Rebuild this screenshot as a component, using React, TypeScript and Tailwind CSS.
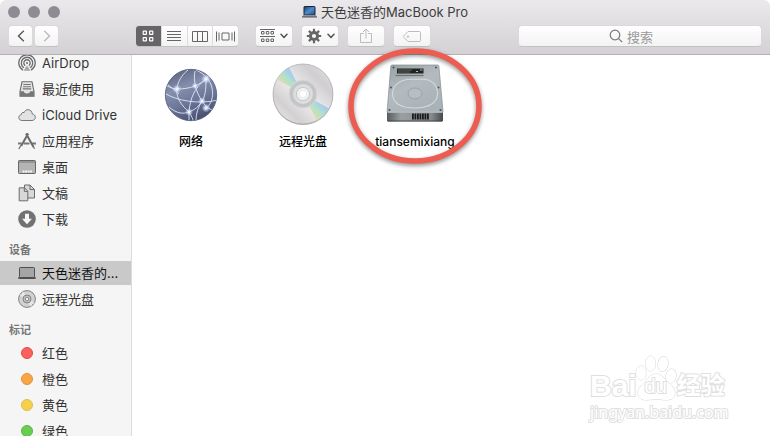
import { useState } from 'react';
import type { ReactNode } from 'react';

const AirDropIcon = () => (
  <svg viewBox="0 0 18 18" className="size-[18px]" fill="none" stroke="#6b6b6b" strokeWidth="1.3">
    <path d="M5 16.1A8.2 8.2 0 1 1 13 16.1" />
    <path d="M6 13.8A5.7 5.7 0 1 1 12 13.8" />
    <path d="M7.2 11.6A3.2 3.2 0 1 1 10.8 11.6" />
    <circle cx="9" cy="9" r="1" fill="#6b6b6b" stroke="none" />
    <path d="M9 11.5 5.5 16.8h7z" fill="#a5a5a5" stroke="none" />
  </svg>
);

const RecentsIcon = () => (
  <svg viewBox="0 0 18 18" className="size-[18px]">
    <path d="M4 1.8h10l2 9.7v4.7H2v-4.7z" fill="#e4e4e4" stroke="#6b6b6b" strokeWidth="1.1" />
    <path d="M5.3 4.5h7.4M5 6.7h8M4.8 8.9h8.4" stroke="#777" strokeWidth="1.1" />
    <path d="M2 11.3h3.8c.4 1.7 1.2 2.2 3.2 2.2s2.8-.5 3.2-2.2H16v4.9H2z" fill="#777" />
  </svg>
);

const CloudIcon = () => (
  <svg viewBox="0 0 18 18" className="size-[18px]">
    <path
      d="M4.2 14.5C2 14.5.8 13.3.8 11.6c0-1.5.9-2.5 2.3-2.8 0-1.7 1.5-2.7 3-2.2.7-1.8 2.1-2.9 3.9-2.9 2.4 0 4.2 1.8 4.2 4.3 1.8.2 3.1 1.5 3.1 3.2 0 1.9-1.4 3.3-3.4 3.3z"
      fill="#e2e2e2"
      stroke="#777"
    />
  </svg>
);

const AppsIcon = () => (
  <svg viewBox="0 0 18 18" className="size-[18px]" fill="none">
    <path d="M0 11.5h3.8M6 11.5h5.5M14 11.5h4" stroke="#777" strokeWidth="2" />
    <path d="M8 1.5l7.5 13.5M10.2 1.5 3.2 14" stroke="#6b6b6b" strokeWidth="2" />
    <path d="M2.8 13.5.8 17M15.3 14.5l1.2 2.2" stroke="#6b6b6b" strokeWidth="1.2" />
  </svg>
);

const DesktopIcon = () => (
  <svg viewBox="0 0 18 18" className="size-[18px]">
    <rect x=".5" y="2.5" width="17" height="13" rx=".8" fill="#b4b4b4" stroke="#666" />
    <path d="M1 4h16" stroke="#777" />
    <path d="M4.5 13.5h9.5" stroke="#f0f0f0" strokeWidth="2" strokeDasharray="2 .5" />
  </svg>
);

const DocumentsIcon = () => (
  <svg viewBox="0 0 18 18" className="size-[18px]" stroke="#6b6b6b">
    <path d="M6.500 1h5.500l4.500 4.500V14h-10z" fill="#d8d8d8" />
    <path d="M12 1v4.500h4.500" fill="none" />
    <path d="M1.200 3.800h5.300l3.300 3.400v9.600H1.200z" fill="#d8d8d8" />
    <path d="M6.300 3.800v3.600h3.500" fill="none" />
  </svg>
);

const DownloadsIcon = () => (
  <svg viewBox="0 0 18 18" className="size-[18px]">
    <circle cx="9" cy="9" r="8.8" fill="#727272" />
    <path d="M7 3.8h4v5h3L9 14.200 4 8.800h3z" fill="#f7f7f7" />
  </svg>
);

const LaptopIcon = () => (
  <svg viewBox="0 0 18 18" className="size-[18px]">
    <rect x="1.5" y="3.5" width="15" height="10" rx=".8" fill="#a5a5a5" stroke="#4f4f4f" />
    <path d="M0 13.2h18v.8l-1 .9H1l-1-.9z" fill="#4f4f4f" />
  </svg>
);

const SmallDiscIcon = () => (
  <svg viewBox="0 0 18 18" className="size-[18px]" stroke="#808080">
    <circle cx="9" cy="9" r="8.4" fill="#d2d2d2" />
    <path d="M9 9 2.5 4.5M9 9 4.500 2.500M9 9l6.500 4.500M9 9l4.500 6.500" stroke="#f0f0f0" strokeWidth="1.5" />
    <circle cx="9" cy="9" r="4" fill="#c6c6c6" />
    <circle cx="9" cy="9" r="1.8" fill="#f5f5f5" />
  </svg>
);

const TitleLaptop = () => (
  <svg viewBox="0 0 15 12" className="h-3 w-[15px]">
    <defs>
      <linearGradient id="screen" x1="0" y1="0" x2="1" y2="1">
        <stop offset="0" stopColor="#173a6b" />
        <stop offset=".5" stopColor="#4d8ed0" />
        <stop offset="1" stopColor="#254f86" />
      </linearGradient>
    </defs>
    <rect x="2" y=".5" width="11" height="8.5" rx=".6" fill="url(#screen)" stroke="#20242b" />
    <path d="M1.2 9h12.6l1.2 2H0z" fill="#8f9298" />
    <path d="M0 11h15" stroke="#505359" />
  </svg>
);

const NetworkIcon = () => (
  <svg viewBox="0 0 64 64" className="size-16">
    <defs>
      <linearGradient id="globe" x1="0.2" y1="0" x2=".6" y2="1">
        <stop offset="0" stopColor="#59627f" />
        <stop offset=".35" stopColor="#8690ad" />
        <stop offset=".65" stopColor="#6c7798" />
        <stop offset="1" stopColor="#454e70" />
      </linearGradient>
      <radialGradient id="spark">
        <stop offset="0" stopColor="#fff" />
        <stop offset=".35" stopColor="#e6edff" stopOpacity=".8" />
        <stop offset="1" stopColor="#c5d2ff" stopOpacity="0" />
      </radialGradient>
      <clipPath id="globeClip">
        <circle cx="32" cy="33" r="25.5" />
      </clipPath>
    </defs>
    <circle cx="32" cy="33" r="25.7" fill="url(#globe)" stroke="#525b7c" strokeWidth=".8" />
    <g clipPath="url(#globeClip)" fill="none" stroke="#e2e8f8" strokeWidth=".9">
      <path d="M8 24c5 2 7 3 10 3 12 0 24-3 32-14" />
      <path d="M7 32c10 6 32 11 52 6" />
      <path d="M8 22c6 5 9 7 12 10" />
      <path d="M29 8c-10 8-14 20-9 30 3 6 7 9 10 12" />
      <path d="M37 8c9 4 14 10 16 18 2 9-1 17-7 21" />
      <path d="M47 17C36 25 31 36 30 50v8" />
      <path d="M36 9c-2 10 1 21 7 30 4 6 8 9 14 10" />
      <path d="M10 45c8 7 15 7 20 5 7-3 9-5 13-11 3-4 4-11 4-22" />
      <path d="M30 50c3 5 4 7 4 9M43 39c-4 7-6 12-6 20" />
    </g>
    <g fill="url(#spark)">
      <circle cx="18" cy="27" r="4.5" />
      <circle cx="47" cy="17" r="5" />
      <circle cx="36" cy="24" r="3.5" />
      <circle cx="43" cy="39" r="4" />
      <circle cx="30" cy="50" r="4" />
      <circle cx="47" cy="46" r="4.5" />
    </g>
  </svg>
);

const DiscIcon = () => (
  <svg viewBox="0 0 64 64" className="size-16">
    <defs>
      <linearGradient id="disc" x1="0" y1="1" x2="1" y2="0">
        <stop offset="0" stopColor="#efeeef" />
        <stop offset=".25" stopColor="#d3d0d2" />
        <stop offset=".5" stopColor="#eeedee" />
        <stop offset=".75" stopColor="#d0ced0" />
        <stop offset="1" stopColor="#e4e2e4" />
      </linearGradient>
      <linearGradient id="rainbow" x1="0" y1="1" x2="1" y2="0">
        <stop offset="0" stopColor="#f4c7a4" stopOpacity="0" />
        <stop offset=".25" stopColor="#f0d59c" />
        <stop offset=".45" stopColor="#a9e0b8" />
        <stop offset=".65" stopColor="#93c9ee" />
        <stop offset=".85" stopColor="#c1afe4" />
        <stop offset="1" stopColor="#c1afe4" stopOpacity="0" />
      </linearGradient>
    </defs>
    <circle cx="32" cy="33" r="30" fill="#8f8f8f" opacity=".7" />
    <circle cx="32" cy="32" r="30" fill="url(#disc)" stroke="#aaa" strokeWidth=".7" />
    <path d="M32 32 6 17.500a30 30 0 0 1 12-12z" fill="url(#rainbow)" opacity=".8" />
    <path d="M32 32 58 46.500a30 30 0 0 1-12 12z" fill="url(#rainbow)" opacity=".8" />
    <circle cx="32" cy="32" r="14" fill="#c3c5c6" stroke="#d8dadb" />
    <circle cx="32" cy="32" r="10.5" fill="#dcddde" stroke="#b9bbbd" strokeWidth=".7" />
    <circle cx="32" cy="32" r="6.5" fill="#f4f4f4" stroke="#b9bbbd" strokeWidth=".8" />
    <circle cx="32" cy="32" r="3.8" fill="#fff" stroke="#d8d8d8" strokeWidth=".6" />
  </svg>
);

const HardDriveIcon = () => (
  <svg viewBox="0 0 64 64" className="size-16">
    <defs>
      <linearGradient id="drive" x1="0" y1="0" x2=".6" y2="1">
        <stop offset="0" stopColor="#98a1a6" />
        <stop offset=".5" stopColor="#b3bbbf" />
        <stop offset="1" stopColor="#a9b2b7" />
      </linearGradient>
      <linearGradient id="driveEdge" x1="0" y1="0" x2="1" y2="0">
        <stop offset="0" stopColor="#565b5e" />
        <stop offset=".25" stopColor="#9a9fa2" />
        <stop offset=".8" stopColor="#85898c" />
        <stop offset="1" stopColor="#45494c" />
      </linearGradient>
    </defs>
    <path d="M4 49.5h56v8.8l-1.2 1.200H5.200L4 58.300z" fill="url(#driveEdge)" />
    <path
      d="M9 3h45.500c.8 0 1.300.4 1.400 1.200L60 49.500c-.1.700-.6 1-1.300 1H5.300c-.8 0-1.300-.4-1.200-1.200L7.800 4.200C7.900 3.400 8.300 3 9 3z"
      fill="url(#drive)"
      stroke="#858d91"
      strokeWidth=".7"
    />
    <path d="M5 50.200h54.500" stroke="#cbd0d2" strokeWidth=".8" />
    <path d="M14 6.500h26.500v5H14z" fill="#222522" />
    <path d="M15 8h14M15 10h12" stroke="#73756a" strokeWidth=".8" />
    <path d="M33 9.500h2M37 8h2.500" stroke="#b4b7b6" strokeWidth="1.1" />
    <path d="M12.500 13.500h28" stroke="#68747a" strokeWidth="1.2" />
    <path
      d="M42 17.200H27C15 18 9.500 24.500 9.500 32 10 41 18 46 32 46c14 0 22-5.500 22.500-13.500.3-8-3.500-13.500-12.500-15.300"
      fill="none"
      stroke="#d3d9dc"
      strokeWidth="1.100"
    />
    <ellipse cx="32" cy="31.5" rx="7" ry="5.5" fill="#b6bec2" stroke="#919a9f" strokeWidth=".8" />
    <g fill="#4c5356">
      <circle cx="10.500" cy="5.500" r="1" />
      <circle cx="53" cy="5.500" r="1" />
      <circle cx="8" cy="25.500" r="1" />
      <circle cx="55.500" cy="25.500" r="1" />
      <circle cx="6.500" cy="48" r="1.100" />
      <circle cx="57.500" cy="48" r="1.100" />
    </g>
    <path d="M29 54.500h17" stroke="#191b1c" strokeWidth="6" strokeDasharray="1.800 .7" />
    <path d="M4.500 59h55" stroke="#3e4143" strokeWidth=".9" />
  </svg>
);

interface PlaceItem {
  id: string;
  label: string;
  icon: ReactNode;
}

const dot = (className: string) => <span className={`size-3 rounded-full border ${className}`} />;

const sections: { title: string | null; items: PlaceItem[] }[] = [
  {
    title: null,
    items: [
      { id: 'airdrop', label: 'AirDrop', icon: <AirDropIcon /> },
      { id: 'recents', label: '最近使用', icon: <RecentsIcon /> },
      { id: 'icloud', label: 'iCloud Drive', icon: <CloudIcon /> },
      { id: 'apps', label: '应用程序', icon: <AppsIcon /> },
      { id: 'desktop', label: '桌面', icon: <DesktopIcon /> },
      { id: 'documents', label: '文稿', icon: <DocumentsIcon /> },
      { id: 'downloads', label: '下载', icon: <DownloadsIcon /> },
    ],
  },
  {
    title: '设备',
    items: [
      { id: 'macbook', label: '天色迷香的...', icon: <LaptopIcon /> },
      { id: 'remote-disc', label: '远程光盘', icon: <SmallDiscIcon /> },
    ],
  },
  {
    title: '标记',
    items: [
      { id: 'red', label: '红色', icon: dot('border-[#e04b48] bg-[#fc605c]') },
      { id: 'orange', label: '橙色', icon: dot('border-[#e2923a] bg-[#f7a545]') },
      { id: 'yellow', label: '黄色', icon: dot('border-[#e5bd42] bg-[#f5d04d]') },
      { id: 'green', label: '绿色', icon: dot('border-[#59b944] bg-[#69cd51]') },
    ],
  },
];

const volumes: PlaceItem[] = [
  { id: 'network', label: '网络', icon: <NetworkIcon /> },
  { id: 'disc', label: '远程光盘', icon: <DiscIcon /> },
  { id: 'drive', label: 'tiansemixiang', icon: <HardDriveIcon /> },
];

const views: PlaceItem[] = [
  {
    id: 'icons',
    label: 'Icon view',
    icon: (
      <svg viewBox="0 0 12 12" className="size-3" fill="none" stroke="currentColor" strokeWidth="1.2">
        <rect x="1.2" y="1.2" width="3.200" height="3.200" rx=".4" />
        <rect x="7.600" y="1.200" width="3.200" height="3.200" rx=".4" />
        <rect x="1.200" y="7.600" width="3.200" height="3.200" rx=".4" />
        <rect x="7.600" y="7.600" width="3.200" height="3.200" rx=".4" />
      </svg>
    ),
  },
  {
    id: 'list',
    label: 'List view',
    icon: (
      <svg viewBox="0 0 14 11" className="h-[11px] w-3.5" stroke="currentColor">
        <path d="M0 .5h14M0 3.500h14M0 6.500h14M0 9.500h14" />
      </svg>
    ),
  },
  {
    id: 'columns',
    label: 'Column view',
    icon: (
      <svg viewBox="0 0 16 11" className="h-[11px] w-4" fill="none" stroke="currentColor">
        <path d="M.5.5h15v10H.5zM5.500.5v10M10.500.5v10" />
      </svg>
    ),
  },
  {
    id: 'gallery',
    label: 'Gallery view',
    icon: (
      <svg viewBox="0 0 19 11" className="h-[11px] w-[19px]" fill="none" stroke="currentColor">
        <path d="M.5.5v10M3 1.500v8M18.500.5v10M16 1.500v8M6 2h7v7H6z" />
      </svg>
    ),
  },
];

const Chevron = () => (
  <svg viewBox="0 0 8 6" className="h-1.5 w-2" fill="none" stroke="#555" strokeWidth="1.5" strokeLinecap="round" strokeLinejoin="round">
    <path d="M1 1.200 4 4.400l3-3.200" />
  </svg>
);

const GearIcon = () => (
  <svg viewBox="0 0 16 16" className="size-4" fill="none" stroke="#666">
    <circle cx="8" cy="8" r="3.600" strokeWidth="3" />
    <path
      d="M8 .8v3M8 12.200v3M.8 8h3M12.200 8h3M2.900 2.900 5 5M11 11l2.100 2.100M2.900 13.100 5 11M11 5l2.100-2.100"
      strokeWidth="2.2"
    />
  </svg>
);

const actions: PlaceItem[] = [
  {
    id: 'arrange',
    label: 'Arrange',
    icon: (
      <>
        <svg viewBox="0 0 15 14" className="h-3.5 w-[15px]" fill="none" stroke="#666">
          <path d="M0 .5h15M0 7.500h15M1.500 2.500h2.500v2.500H1.500zM6.300 2.500h2.500v2.500H6.300zM11 2.500h2.500v2.500H11zM1.500 10h2.500v2.500H1.500zM6.300 10h2.500v2.500H6.300zM11 10h2.500v2.500H11z" />
        </svg>
        <Chevron />
      </>
    ),
  },
  {
    id: 'action',
    label: 'Action',
    icon: (
      <>
        <GearIcon />
        <Chevron />
      </>
    ),
  },
  {
    id: 'share',
    label: 'Share',
    icon: (
      <svg viewBox="0 0 12 16" className="h-4 w-3" fill="none" stroke="#bdbdbd">
        <path d="M4 5.500H.5v9h11v-9H8M6 10.500V1M3 4l3-3 3 3" />
      </svg>
    ),
  },
  {
    id: 'tags',
    label: 'Tags',
    icon: (
      <svg viewBox="0 0 18 11" className="h-[11px] w-[18px]" fill="none" stroke="#bdbdbd">
        <path d="M5 .5h11.500c.6 0 1 .4 1 1v8c0 .6-.4 1-1 1H5L.8 6.200c-.4-.4-.4-1 0-1.400z" />
        <circle cx="5" cy="5.500" r=".8" />
      </svg>
    ),
  },
];

const controlClass =
  'flex h-[22px] items-center justify-center rounded-[4px] border border-[#dad8da] border-b-[#c2c0c2] bg-gradient-to-b from-white to-[#f4f3f4]';

const Toolbar = () => {
  const [view, setView] = useState('icons');

  return (
    <header className="shrink-0 rounded-t-md border-b border-[#b3b1b3] bg-gradient-to-b from-[#ebe9eb] to-[#d3d1d3]">
      <div className="grid h-[23px] grid-cols-[1fr_auto_1fr] items-center px-2">
        <div className="flex gap-2">
          <button aria-label="Close" className="size-3 rounded-full bg-[#8e8c93]" />
          <button aria-label="Minimize" className="size-3 rounded-full bg-[#8e8c93]" />
          <button aria-label="Zoom" className="size-3 rounded-full bg-[#8e8c93]" />
        </div>
        <h1 className="flex items-center gap-1 text-[13px] leading-4 text-[#3c3c3c]">
          <TitleLaptop />
          天色迷香的MacBook Pro
        </h1>
      </div>

      <div className="flex items-center px-2 pt-0.5 pb-[7px]">
        <nav className="flex gap-px">
          <button aria-label="Back" className={`${controlClass} w-[25px]`}>
            <svg viewBox="0 0 8 12" className="h-3 w-2" fill="none" stroke="#555" strokeWidth="1.4">
              <path d="M6.800.8 1.500 6l5.300 5.200" />
            </svg>
          </button>
          <button aria-label="Forward" disabled className={`${controlClass} w-[25px]`}>
            <svg viewBox="0 0 8 12" className="h-3 w-2" fill="none" stroke="#bbb" strokeWidth="1.4">
              <path d="M1.200.8 6.500 6l-5.300 5.200" />
            </svg>
          </button>
        </nav>

        <div className={`${controlClass} ml-[76px] w-[104px] overflow-hidden`}>
          {views.map((item) => (
            <button
              key={item.id}
              aria-label={item.label}
              onClick={() => setView(item.id)}
              className={`flex h-[22px] flex-1 items-center justify-center border-r border-[#dedcde] last:border-r-0 ${
                view === item.id ? 'bg-[#666466] text-white' : 'text-[#666]'
              }`}
            >
              {item.icon}
            </button>
          ))}
        </div>

        <div className="ml-4 flex gap-2">
          {actions.map((item) => (
            <button key={item.id} aria-label={item.label} className={`${controlClass} w-[38px] gap-[5px]`}>
              {item.icon}
            </button>
          ))}
        </div>

        <label className={`${controlClass} ml-auto w-[244px] gap-1 pr-[18px]`}>
          <svg viewBox="0 0 14 14" className="size-3.5" fill="none" stroke="#777" strokeWidth="1.2">
            <circle cx="6" cy="6" r="4.800" />
            <path d="m9.600 9.600 3.600 3.600" />
          </svg>
          <input
            type="search"
            aria-label="搜索"
            placeholder="搜索"
            className="field-sizing-content h-4 text-[13px] leading-4 text-[#333] outline-none placeholder:text-[#999]"
          />
        </label>
      </div>
    </header>
  );
};

const Sidebar = () => {
  const [selected, setSelected] = useState('macbook');

  return (
    <aside className="w-[132px] shrink-0 overflow-hidden border-r border-[#dcdcdc] bg-[#f5f5f5]">
      {/* list is scrolled slightly under the toolbar */}
      <div className="-mt-[5px]">
        {sections.map((section) => (
          <section key={section.items[0].id}>
            {section.title && (
              <h2 className="h-7 pt-2.5 pl-[9px] text-[11px] leading-4 font-bold text-[#777]">{section.title}</h2>
            )}
            <ul>
              {section.items.map((item) => (
                <li key={item.id} className="py-px">
                  <button
                    onClick={() => setSelected(item.id)}
                    className={`flex h-6 w-full items-center gap-1.5 pl-[18px] text-[13px] leading-4 whitespace-nowrap ${
                      selected === item.id ? 'bg-[#c9c9c9] text-[#111]' : 'text-[#333]'
                    }`}
                  >
                    <span className="flex w-[18px] justify-center">{item.icon}</span>
                    {item.label}
                  </button>
                </li>
              ))}
            </ul>
          </section>
        ))}
      </div>
    </aside>
  );
};

const HighlightRing = () => (
  <svg
    viewBox="0 0 142 126"
    className="pointer-events-none absolute -top-4 left-1/2 h-[126px] w-[142px] -translate-x-1/2 drop-shadow-[0_2px_2px_rgba(0,0,0,0.45)]"
  >
    <ellipse cx="71" cy="60" rx="64" ry="55" fill="none" stroke="#ec5c50" strokeWidth="5.5" />
  </svg>
);

const Watermark = () => (
  <div className="pointer-events-none absolute right-[43px] bottom-3.5 w-[137px] text-white [paint-order:stroke_fill] [-webkit-text-stroke:2px_#e0e0e0]">
    <div className="flex items-end">
      <span className="font-['Liberation_Sans'] text-[30px] leading-8 font-bold">Bai</span>
      <div className="relative -ml-0.5 h-12 w-[42px] shrink-0">
        <svg viewBox="0 0 42 48" className="h-12 w-[42px]" fill="#fff" stroke="#d6d6d6">
          <ellipse cx="6" cy="19" rx="5" ry="7" />
          <ellipse cx="15.500" cy="9.500" rx="5" ry="7.500" />
          <ellipse cx="28" cy="10" rx="5" ry="7.500" transform="rotate(10 28 10)" />
          <ellipse cx="36" cy="22" rx="5" ry="7" transform="rotate(15 36 22)" />
          <path d="M21 20c-6 0-8 5-11 8-4 4-7 6-7 11 0 5 4 7 8 7 5 0 6-1 10-1s5 1 10 1 9-2 9-7-3-7-7-11c-4-3-6-8-12-8z" />
        </svg>
        <span className="absolute inset-x-0 bottom-1 text-center font-['Liberation_Sans'] text-[20px] leading-6">du</span>
      </div>
      <span className="text-[24px] leading-8 font-bold">经验</span>
    </div>
    <p className="font-['Noto_Sans'] text-[16px] leading-5 whitespace-nowrap">jingyan.baidu.com</p>
  </div>
);

export default function App() {
  return (
    <div className="flex h-screen flex-col overflow-hidden bg-white font-[Inter,'Noto_Sans_CJK_SC',sans-serif]">
      <Toolbar />
      <div className="flex min-h-0 flex-1">
        <Sidebar />
        <main className="relative min-w-0 flex-1 pt-[7px] pl-[3px]">
          <ul className="flex flex-wrap">
            {volumes.map((item) => (
              <li key={item.id} className="relative">
                <button className="flex w-28 flex-col items-center gap-2 text-[12px] leading-4 font-medium text-black">
                  {item.icon}
                  {item.label}
                </button>
                {item.id === 'drive' && <HighlightRing />}
              </li>
            ))}
          </ul>
          <Watermark />
        </main>
      </div>
    </div>
  );
}
